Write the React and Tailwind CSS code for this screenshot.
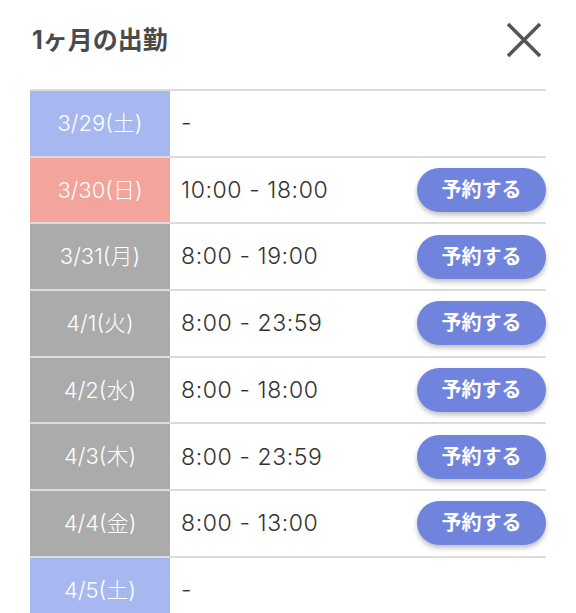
const ROWS = [
  { date: '3/29(土)', kind: 'sat', time: '-' },
  { date: '3/30(日)', kind: 'sun', time: '10:00 - 18:00' },
  { date: '3/31(月)', kind: 'day', time: '8:00 - 19:00' },
  { date: '4/1(火)', kind: 'day', time: '8:00 - 23:59' },
  { date: '4/2(水)', kind: 'day', time: '8:00 - 18:00' },
  { date: '4/3(木)', kind: 'day', time: '8:00 - 23:59' },
  { date: '4/4(金)', kind: 'day', time: '8:00 - 13:00' },
  { date: '4/5(土)', kind: 'sat', time: '-' },
];

const DATE_BG = {
  sat: 'bg-[#a7b8f1]',
  sun: 'bg-[#f3a49b]',
  day: 'bg-[#ababab]',
};

const App = () => {
  return (
    <div
      className="h-[613px] w-[576px] overflow-hidden bg-white"
      style={{ fontFamily: 'Inter, "Noto Sans CJK JP", sans-serif' }}
    >
      {/* Header */}
      <div className="flex h-[89px] items-start justify-between pl-[32px] pr-[34px] pt-[21px]">
        <h2 className="text-[25px] font-bold leading-[38px] text-[#4a4a4a]">1ヶ月の出勤</h2>
        <svg width="36" height="36" viewBox="0 0 36 36" className="mt-[1px]" aria-label="close">
          <path d="M2 2 L34 34 M34 2 L2 34" stroke="#555" strokeWidth="3.6" strokeLinecap="butt" fill="none" />
        </svg>
      </div>

      {/* Schedule table */}
      <div className="ml-[30px] w-[516px] border-t-2 border-[#dcdcdc]">
        {ROWS.map((row) => (
          <div key={row.date} className="flex h-[66.7px] border-b-2 border-[#dcdcdc]">
            <div
              className={`flex w-[140px] shrink-0 items-center justify-center text-[22px] font-light text-white ${DATE_BG[row.kind]}`}
            >
              {row.date}
            </div>
            <div className="flex flex-1 items-center justify-between pl-[11px]">
              <span className="text-[23px] font-light tracking-[0.6px] text-[#333]">{row.time}</span>
              {row.time !== '-' && (
                <button className="flex h-[44px] w-[129px] items-center justify-center rounded-full bg-[#7084de] text-[20px] font-bold text-white shadow-[0_3px_5px_rgba(0,0,0,0.25)]">
                  予約する
                </button>
              )}
            </div>
          </div>
        ))}
      </div>
    </div>
  );
};

export default App;
